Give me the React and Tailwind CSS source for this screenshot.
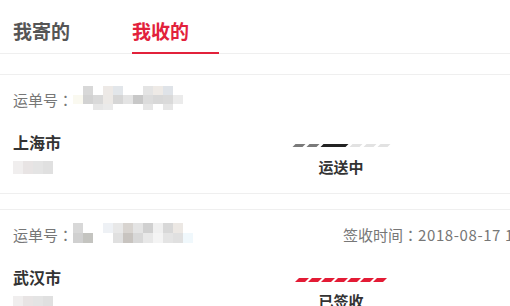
import React from "react";

const cn = "font-['Noto_Sans_CJK_SC','Noto_Sans',sans-serif]";
// centered full-width colon, like the reference
const Colon = () => <span className="font-['Noto_Sans_CJK_TC',sans-serif]">：</span>;

const mosaic1 = [
  ["bg-white", "bg-[#d8d8d8]", "bg-white", "bg-[#ede9e6]", "bg-[#e2e6ea]", "bg-white", "bg-white", "bg-[#e4e4e4]", "bg-[#eeeae6]", "bg-[#dfe3e8]", "bg-white"],
  ["bg-[#faf9f0]", "bg-[#d2d2d2]", "bg-[#d9d9d9]", "bg-[#ece9e6]", "bg-[#d6d6d6]", "bg-[#e4e4e4]", "bg-[#c8c8c8]", "bg-[#dcdcdc]", "bg-[#d8d8d8]", "bg-[#dadada]", "bg-[#ebebeb]"],
  ["bg-white", "bg-white", "bg-[#e6e6e6]", "bg-[#eaeaea]", "bg-white", "bg-white", "bg-white", "bg-[#e6e6e6]", "bg-white", "bg-[#e6e6e6]", "bg-white"],
];
const rowH1 = ["h-[9px]", "h-[9px]", "h-[6px]"];

const mosaic2 = [
  ["bg-[#d8d8d8]", "bg-white", "bg-white", "bg-[#eef1f5]", "bg-[#e8e8e8]", "bg-[#d8d4d0]", "bg-[#e4e4e4]", "bg-[#d0d0d0]", "bg-[#f0f0f0]", "bg-[#d8d8d8]", "bg-[#ece8e4]", "bg-white"],
  ["bg-[#d0d0d0]", "bg-[#c4c4c0]", "bg-white", "bg-white", "bg-[#e0e0e0]", "bg-[#c8c4c0]", "bg-[#d8d8d8]", "bg-[#e8e8e8]", "bg-[#f4f4f4]", "bg-[#e4e4e4]", "bg-[#e0e0e0]", "bg-[#f0f8fc]"],
];
const rowH2 = ["h-[10px]", "h-[10px]"];

const nameBlur = [["bg-[#f0eeee]", "bg-[#e8e4e4]", "bg-[#e4e4e4]", "bg-[#e0e0e0]"]];

const Mosaic = ({ rows, heights, className = "" }) => (
  <div className={`flex flex-col ${className}`}>
    {rows.map((row, i) => (
      <div key={i} className={`flex ${heights[i]}`}>
        {row.map((c, j) => (
          <div key={j} className={`w-[10px] h-full ${c}`} />
        ))}
      </div>
    ))}
  </div>
);

// progress stripes
const TransitBar = () => (
  <div className="flex gap-[4px] h-[3px]">
    <div className="w-[10px] h-full bg-[#7a7a7a] -skew-x-[45deg]" />
    <div className="w-[10px] h-full bg-[#7a7a7a] -skew-x-[45deg]" />
    <div className="w-[25px] h-full bg-[#222] -skew-x-[45deg]" />
    <div className="w-[10px] h-full bg-[#e2e2e2] -skew-x-[45deg]" />
    <div className="w-[10px] h-full bg-[#e2e2e2] -skew-x-[45deg]" />
    <div className="w-[10px] h-full bg-[#e2e2e2] -skew-x-[45deg]" />
  </div>
);

const SignedBar = () => (
  <div className="flex gap-[3px] h-[4px]">
    {[0, 1, 2, 3, 4, 5, 6].map((i) => (
      <div key={i} className="w-[10px] h-full bg-[#e31b35] -skew-x-[45deg]" />
    ))}
  </div>
);

const App = () => {
  return (
    <div className={`w-[510px] h-[306px] overflow-hidden bg-white ${cn}`}>
      {/* Tabs */}
      <div className="h-[54px] border-b border-[#efefef] flex gap-[32px] pl-[13px]">
        <div className="relative w-[87px] h-[53px] pt-[10px] flex items-center text-[19px] font-bold text-[#555]">
          我寄的
        </div>
        <div className="relative w-[87px] h-[53px] pt-[10px] flex items-center text-[19px] font-bold text-[#e2213b]">
          我收的
          <div className="absolute left-0 -bottom-[1px] w-[87px] h-[2px] bg-[#e2213b]" />
        </div>
      </div>

      {/* Card 1 */}
      <div className="mt-[20px] border-y border-[#efefef]">
        <div className="h-[50px] flex items-center pl-[13px] text-[15px] text-[#777]">
          <span>运单号<Colon /></span>
          <Mosaic rows={mosaic1} heights={rowH1} className="-mt-[4px]" />
        </div>
        <div className="h-[68px] flex pl-[13px]">
          <div className="w-[228px] pt-[6px]">
            <div className="text-[16px] leading-[22px] font-bold text-[#333]">上海市</div>
            <Mosaic rows={nameBlur} heights={["h-[13px]"]} className="mt-[8px]" />
          </div>
          <div className="w-[200px] pt-[19px] flex flex-col items-center">
            <TransitBar />
            <div className="mt-[10px] text-[15px] leading-[20px] font-bold text-[#333]">运送中</div>
          </div>
        </div>
      </div>

      {/* Card 2 */}
      <div className="mt-[15px] border-y border-[#efefef]">
        <div className="h-[50px] flex items-center pl-[13px] text-[15px] text-[#777] whitespace-nowrap">
          <div className="w-[330px] flex items-center shrink-0">
            <span>运单号<Colon /></span>
            <Mosaic rows={mosaic2} heights={rowH2} className="-mt-[4px]" />
          </div>
          <span>
            签收时间<Colon />
            <span className="tracking-[0.6px]">2018-08-17 12:30:26</span>
          </span>
        </div>
        <div className="h-[68px] flex pl-[13px]">
          <div className="w-[228px] pt-[6px]">
            <div className="text-[16px] leading-[22px] font-bold text-[#333]">武汉市</div>
            <Mosaic rows={nameBlur} heights={["h-[13px]"]} className="mt-[8px]" />
          </div>
          <div className="w-[200px] pt-[18px] flex flex-col items-center">
            <SignedBar />
            <div className="mt-[9px] text-[15px] leading-[20px] font-bold text-[#333]">已签收</div>
          </div>
        </div>
      </div>
    </div>
  );
};

export default App;
